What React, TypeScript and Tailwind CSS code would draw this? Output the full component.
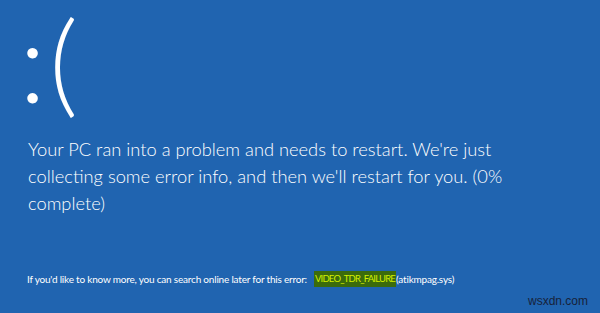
export default function App() {
    return (
        <section className="relative w-[600px] h-[313px] overflow-hidden bg-[#2064b0] text-white font-['Lato',sans-serif] font-light">
            <div className="h-[134px] pl-[19px]">
                <span className="inline-block pr-[10px] text-[113px] leading-[119px] tracking-[3px]">:(</span>
            </div>

            <div className="pl-[28px] mt-[2px] text-[18.3px] leading-[27px]">
                <p>Your PC ran into a problem and needs to restart. We're just</p>
                <p>collecting some error info, and then we'll restart for you. (0%</p>
                <p>complete)</p>
            </div>

            <div className="flex items-center pl-[27px] mt-[54px] text-[10px] leading-[16px] font-normal tracking-[-0.2px]">
                <span>If you'd like to know more, you can search online later for this error:</span>
                <span className="ml-[7px] bg-[#3b6b0c] text-[#d4f000] px-[1px] text-[9.5px] tracking-[-0.8px]">VIDEO_TDR_FAILURE</span>
                <span>(atikmpag.sys)</span>
            </div>

            <div className="absolute right-[12px] bottom-[3px] text-[12px] text-[#17223a] font-['Liberation_Sans',sans-serif] font-normal">
                wsxdn.com
            </div>
        </section>
    )
}
